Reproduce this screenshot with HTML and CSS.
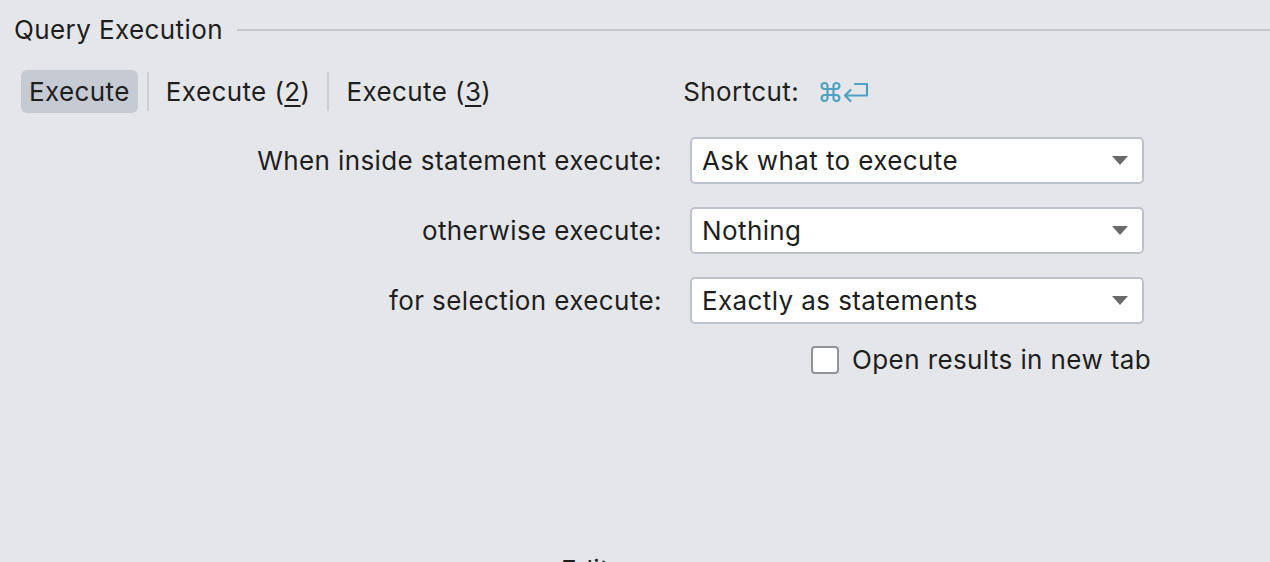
FILE: index.html
```html
<!DOCTYPE html>
<html>
<head>
<meta charset="utf-8">
<link rel="stylesheet" href="styles.css">
</head>
<body>
<div class="page">
  <div class="header">
    <span class="title">Query Execution</span>
    <span class="rule"></span>
  </div>
  <div class="tabs">
    <div class="tab active">Execute</div>
    <div class="sep"></div>
    <div class="tab">Execute (<u>2</u>)</div>
    <div class="sep"></div>
    <div class="tab">Execute (<u>3</u>)</div>
    <div class="shortcut">
      <span>Shortcut:</span>
      <svg class="keys" width="50" height="24" viewBox="0 0 50 24">
        <g fill="none" stroke="#4fa1c3" stroke-width="2.2" stroke-linecap="round" stroke-linejoin="round">
          <path d="M8.5 6.5V17.5M14.5 6.5V17.5M5.5 9H17.5M5.5 15H17.5M8.5 6.5A3 3 0 1 0 5.5 9M14.5 6.5A3 3 0 1 1 17.5 9M8.5 17.5A3 3 0 1 1 5.5 15M14.5 17.5A3 3 0 1 0 17.5 15"/>
          <path d="M36 4H48V15.5H26M31.5 10L26 15.5L31.5 21"/>
        </g>
      </svg>
    </div>
  </div>
  <div class="form">
    <label class="lbl">When inside statement execute:</label>
    <div class="combo"><span>Ask what to execute</span><i class="arrow"></i></div>
    <label class="lbl">otherwise execute:</label>
    <div class="combo"><span>Nothing</span><i class="arrow"></i></div>
    <label class="lbl">for selection execute:</label>
    <div class="combo"><span>Exactly as statements</span><i class="arrow"></i></div>
    <div></div>
    <div class="check-row"><span class="box"></span><span>Open results in new tab</span></div>
  </div>
  <div class="footer">Edit</div>
</div>
</body>
</html>
```

FILE: styles.css
```css
html, body {
  margin: 0;
  padding: 0;
  background: #e5e6ea;
  overflow: hidden;
}
.page {
  width: 1270px;
  height: 562px;
  overflow: hidden;
  font-family: Inter, "Open Sans", sans-serif;
  font-size: 26px;
  color: #1e1e1e;
  letter-spacing: 0.4px;
}
.header {
  display: flex;
  align-items: center;
  padding: 12px 0 0 14px;
  height: 34px;
}
.title {
  white-space: nowrap;
}
.rule {
  flex: 1;
  height: 2px;
  background: #c3c7ce;
  margin-left: 14px;
  margin-top: 2px;
}
.tabs {
  display: flex;
  align-items: center;
  margin: 24px 0 0 21px;
  height: 43px;
}
.tab {
  height: 43px;
  line-height: 43px;
  padding: 0 8px 0 8px;
  border-radius: 6px;
  white-space: nowrap;
}
.tab u {
  text-decoration-thickness: 2px;
  text-underline-offset: 4px;
}
.tab.active {
  background: #c6cad3;
}
.sep {
  width: 2px;
  height: 39px;
  background: #cbced5;
  margin: 0 9px 0 9px;
}
.shortcut {
  display: flex;
  align-items: center;
  margin-left: 184px;
  gap: 20px;
}
.keys {
  display: block;
}
.form {
  display: grid;
  grid-template-columns: 662px 454px;
  column-gap: 28px;
  row-gap: 23px;
  margin-top: 24px;
  align-items: center;
}
.lbl {
  text-align: right;
  white-space: nowrap;
}
.combo {
  height: 43px;
  border: 2px solid #bcc2cb;
  border-radius: 5px;
  background: #ffffff;
  display: flex;
  align-items: center;
  justify-content: space-between;
  padding: 0 14px 0 10px;
}
.arrow {
  width: 0;
  height: 0;
  border-left: 8px solid transparent;
  border-right: 8px solid transparent;
  border-top: 9px solid #6a6a6a;
}
.check-row {
  display: flex;
  align-items: center;
  gap: 13px;
  margin-left: 121px;
  margin-top: -3px;
  white-space: nowrap;
}
.box {
  flex: none;
  width: 24px;
  height: 24px;
  border: 2px solid #8f9298;
  border-radius: 4px;
  background: #ffffff;
}
.footer {
  margin: 179px 0 0 561px;
  white-space: nowrap;
}
```
